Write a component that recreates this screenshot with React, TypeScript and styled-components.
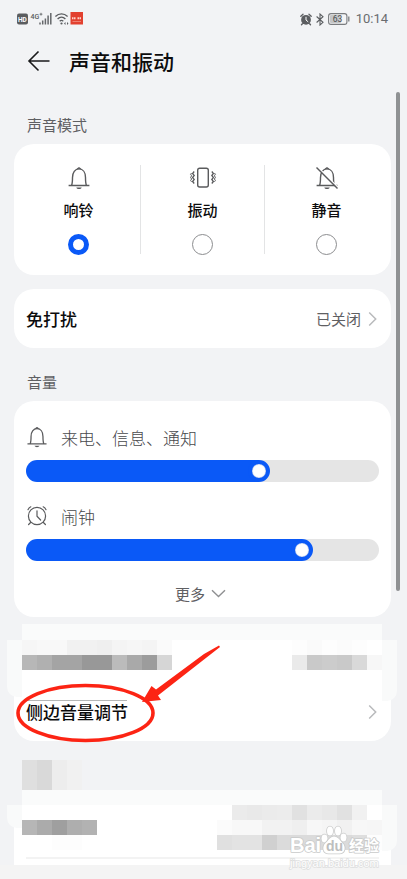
import React, { useState } from "react";
import styled, { createGlobalStyle } from "styled-components";

const GlobalStyle = createGlobalStyle`
  * { box-sizing: border-box; }
  body {
    margin: 0;
    background: #f2f3f5;
    font-family: "Noto Sans", "Noto Sans CJK SC", sans-serif;
    color: #0c0c0d;
  }
  button, input { font-family: inherit; margin: 0; }
`;

const Page = styled.main`
  position: relative;
  min-height: 100vh;
  display: flex;
  flex-direction: column;
  overflow: hidden;
  font-family: "Noto Sans CJK SC", sans-serif;
`;

const StatusBar = styled.div`
  display: flex;
  align-items: center;
  justify-content: space-between;
  height: 38px;
  padding: 0 19px 0 17px;
`;

const StatusGroup = styled.div`
  display: flex;
  align-items: center;
  gap: 4px;
  svg { display: block; }
`;

const Clock = styled.time`
  margin-left: 2px;
  font: 400 13px/16px Roboto, sans-serif;
  color: #6a6c6f;
`;

const Header = styled.header`
  display: flex;
  align-items: center;
  height: 46px;
  margin-bottom: 7px;
  padding: 0 27px;
  gap: 18px;
`;

const BackButton = styled.button`
  display: flex;
  padding: 0;
  border: 0;
  background: none;
`;

const Title = styled.h1`
  margin: 0;
  font-size: 21px;
  line-height: 30px;
  font-weight: 500;
`;

const SectionLabel = styled.h2`
  margin: 0;
  padding: 23px 27px 9px;
  font-size: 15px;
  line-height: 21px;
  font-weight: 400;
  color: #5f6063;
`;

const Card = styled.section`
  margin: 0 16px 0 14px;
  border-radius: 20px;
  background: #fff;
`;

const ModeCard = styled(Card)`
  display: flex;
  height: 131px;
  margin-bottom: 14px;
  padding: 0 3px;
`;

const Mode = styled.label`
  flex: 1;
  display: flex;
  flex-direction: column;
  align-items: center;
  padding-top: 22px;
  svg { display: block; }
`;

const ModeName = styled.span`
  margin: 10px 0 14px;
  font-size: 15px;
  line-height: 20px;
  font-weight: 500;
`;

const Radio = styled.input`
  appearance: none;
  width: 21px;
  height: 21px;
  border: 1px solid #8c8d8f;
  border-radius: 50%;
  background: #fff;
  &:checked { border: 5px solid #0a59f7; }
`;

const Divider = styled.span`
  width: 1px;
  margin: 21px 0;
  background: #e3e4e5;
`;

const LinkRow = styled.a`
  display: flex;
  align-items: center;
  justify-content: space-between;
  height: 59px;
  padding: 0 14px 0 12px;
  font-size: 17px;
  font-weight: 500;
  color: #0c0c0d;
  text-decoration: none;
`;

const RowValue = styled.span`
  display: flex;
  align-items: center;
  gap: 7px;
  font-size: 15px;
  font-weight: 400;
  color: #5f6063;
`;

const VolumeCard = styled(Card)`
  display: flex;
  flex-direction: column;
  padding: 23px 12px 0;
`;

const VolumeLabel = styled.label`
  display: flex;
  align-items: center;
  gap: 13px;
  height: 26px;
  margin-bottom: 10px;
  font-size: 17px;
  font-weight: 300;
  color: #48494c;
`;

const Slider = styled.input`
  appearance: none;
  display: block;
  width: 100%;
  height: 22px;
  border-radius: 11px;
  background: linear-gradient(to right, #0a59f7 var(--fill), #e5e5e5 var(--fill));
  &::-webkit-slider-thumb {
    appearance: none;
    width: 22px;
    height: 22px;
    border: 4px solid #0a59f7;
    border-radius: 50%;
    background: #fff;
    box-shadow: inset 0 0 1px #0a3fb0;
  }
  & + ${VolumeLabel} { margin-top: 21px; }
`;

const MoreButton = styled.button`
  display: flex;
  align-items: center;
  justify-content: center;
  gap: 6px;
  height: 44px;
  margin: 10px 0 2px;
  padding: 0 10px 0 6px;
  border: 0;
  background: none;
  font-size: 15px;
  color: #5f6063;
`;

const MaskStrip = styled.div<{ $height: number; $gap?: number }>`
  height: ${(p) => p.$height}px;
  margin: ${(p) => p.$gap ?? 0}px 25px 0 22px;
  background: #fafbfb;
`;

const MaskedCard = styled(Card)<{ $rounded?: boolean }>`
  position: relative;
  border-radius: ${(p) => (p.$rounded ? "0 0 20px 20px" : "0")};
`;

const Bleed = styled.span<{ $side: "left" | "right"; $height: number }>`
  position: absolute;
  top: 0;
  ${(p) => (p.$side === "left" ? "left: -7px" : "right: -6px")};
  width: 15px;
  height: ${(p) => p.$height}px;
  border-radius: ${(p) => (p.$side === "left" ? "0 0 0 10px" : "0 0 10px 0")};
  background: #f9fafa;
`;

const MaskedRow = styled.div<{ $height: number }>`
  display: flex;
  justify-content: space-between;
  height: ${(p) => p.$height}px;
  padding: 0 9px 0 8px;
`;

const MosaicGrid = styled.div<{ $columns: number }>`
  display: grid;
  grid-template-columns: repeat(${(p) => p.$columns}, 15px);
  grid-auto-rows: 15px;
`;

const Cell = styled.span<{ $tone: string }>`
  background: #${(p) => p.$tone.repeat(3)};
`;

const HiddenHeading = styled.div`
  margin: 19px 0 0 22px;
`;

const Hairline = styled.hr<{ $dark?: boolean }>`
  position: absolute;
  margin: 0;
  border: 0;
  ${(p) =>
    p.$dark
      ? "top: 60px; left: 13px; width: 100px; height: 1px; background: #b5b7b7;"
      : "bottom: 6px; left: 12px; right: 12px; height: 2px; background: #f3f3f3;"}
`;

const Annotation = styled.svg`
  position: absolute;
  top: 0;
  left: 0;
  overflow: visible;
  pointer-events: none;
`;

const Watermark = styled.svg`
  position: absolute;
  right: 10px;
  bottom: -4px;
  overflow: visible;
`;

const Footer = styled.div`
  flex: 1;
  min-height: 14px;
  background: #f4f4f4;
`;

const ScrollThumb = styled.span`
  position: absolute;
  top: 92px;
  right: 7px;
  width: 4px;
  height: 499px;
  border-radius: 2px;
  background: #8f9193;
`;

const Bell = ({ size = 24, muted = false }: { size?: number; muted?: boolean }) => (
  <svg width={size} height={size} viewBox="0 0 24 24" fill="none" stroke="#5a5b5d" strokeWidth="1.4">
    <path d="M1.6 19.5h20.8M4.6 19.3c.8-1.8.9-3.5.9-7.800 0-5 2.500-8.600 6.500-8.600s6.500 3.600 6.500 8.600c0 4.300.1 6 .9 7.800" />
    <path d="M10.200 2.700c.3-1.300 3.300-1.300 3.600 0z" fill="#5a5b5d" strokeWidth=".8" />
    <path d="M9.300 21.600h5.400c-.6 2-4.800 2-5.400 0z" fill="#5a5b5d" stroke="none" />
    {muted && (
      <>
        <path d="M2.800 1.200l20.500 20.500" stroke="#fff" strokeWidth="1.600" />
        <path d="M1.500 1.500L22.500 22.500" />
      </>
    )}
  </svg>
);

const Vibrate = () => (
  <svg width="28" height="24" viewBox="0 0 28 24" fill="none" stroke="#5a5b5d" strokeWidth="1.400">
    <rect x="8.700" y="2.200" width="10.600" height="18.800" rx="2" />
    <path d="M5.200 5.500l-1.600 2 1.600 2-1.600 2 1.600 2-1.600 2 1.600 2M22.800 5.500l1.600 2-1.600 2 1.600 2-1.600 2 1.600 2-1.600 2" strokeWidth="1.300" />
    <path d="M2.600 7l-1 1.200 1 1.600-1 1.600 1 1.600-1 1.600 1 1.200M25.400 7l1 1.200-1 1.600 1 1.600-1 1.600 1 1.600-1 1.200" strokeWidth="1" />
  </svg>
);

const AlarmClock = () => (
  <svg width="22" height="22" viewBox="0 0 22 22" fill="none" stroke="#5a5b5d" strokeWidth="1.200" strokeLinecap="round">
    <circle cx="11" cy="11" r="8.600" />
    <path d="M11 5.800v5.400l3.600 3.800M2 4.700C2.600 3.400 3.500 2.400 4.800 1.800M20 4.700c-.6-1.300-1.500-2.300-2.800-2.900M4.600 17.500l-2 2M17.400 17.500l2 2" />
  </svg>
);

const Chevron = () => (
  <svg width="9" height="16" viewBox="0 0 9 16" fill="none" stroke="#b9babc" strokeWidth="1.500">
    <path d="M1.200 1.500L7.700 8l-6.500 6.500" />
  </svg>
);

const NetworkIcons = () => (
  <svg width="67" height="14" viewBox="0 0 67 14" fill="none" role="img" aria-label="HD 4G+">
    <rect x="0" y="1.500" width="11" height="11" rx="2" fill="#5b5d60" />
    <text x="1" y="9.500" fontFamily="Roboto" fontWeight="700" fontSize="6.500" fill="#fff">HD</text>
    <text x="13.600" y="6.500" fontFamily="Roboto" fontWeight="500" fontSize="7" fill="#5b5d60">4G</text>
    <path d="M22.600 2.200h2.800M24 .8v2.800" stroke="#5b5d60" strokeWidth=".8" />
    <path d="M24 12.500v-2M26.700 12.500v-4M29.400 12.500V6.500M32.100 12.500V3.500M34.800 12.500V1" transform="translate(-1 0)" stroke="#66686b" strokeWidth="1.500" />
    <path d="M38.400 4.400c3.600-3.400 8.600-3.400 12.200 0M40.600 6.900c2.300-2.200 5.500-2.200 7.800 0M42.700 9.200c1.100-1 2.500-1 3.600 0" stroke="#5b5d60" strokeWidth="1.400" />
    <circle cx="44.500" cy="11.500" r="1.100" fill="#5b5d60" />
    <path d="M47 11.500l1.500-1.500v3zM51.500 11.500l-1.500-1.500v3z" fill="#5b5d60" />
    <rect x="53.500" y="0" width="12.500" height="12.500" fill="#e2402f" />
    <path d="M55 6.200h4M60.500 6.200h4" stroke="#ffd3ca" strokeWidth="2" strokeDasharray="1.500 .5" />
    <path d="M55.500 9.500h8.500" stroke="#f39a8c" strokeWidth=".7" />
  </svg>
);

const AlarmStatus = () => (
  <svg width="12" height="13" viewBox="0 0 12 13" fill="none" stroke="#5b5d60" strokeLinecap="round">
    <circle cx="6" cy="6.800" r="4.900" fill="#5b5d60" stroke="none" />
    <path d="M.8 3.200L3 1.200M11.200 3.200L9 1.200M2.400 10.800l-.9 1M9.600 10.800l.9 1" strokeWidth="1.300" />
    <path d="M6 4.200V7l1.900 1.600" stroke="#fff" />
  </svg>
);

const Bluetooth = () => (
  <svg width="8" height="13" viewBox="0 0 8 13" fill="none" stroke="#5b5d60" strokeWidth="1.100">
    <path d="M.6 3.500l6.400 5.800-3 2.700V1l3 2.700L.6 9.500" />
  </svg>
);

const Battery = () => (
  <svg width="22" height="12" viewBox="0 0 22 12" role="img" aria-label="63%">
    <rect x=".6" y=".6" width="18.300" height="10.800" rx="2.400" fill="#f4f4f5" stroke="#7a7c7f" strokeWidth="1.100" />
    <rect x="2" y="2" width="11" height="8" rx="1" fill="#c4c5c7" />
    <path d="M20.800 3.500v5" stroke="#7a7c7f" strokeWidth="1.300" />
    <text x="4.700" y="9" fontFamily="Roboto" fontWeight="400" fontSize="8.500" fill="#4a4c4e">63</text>
  </svg>
);

const Mosaic = ({ rows }: { rows: string[] }) => {
  const cells = rows.map((row) => row.split(" "));
  return (
    <MosaicGrid $columns={cells[0].length} aria-hidden="true">
      {cells.flatMap((row, y) => row.map((tone, x) => <Cell key={`${y}-${x}`} $tone={tone} />))}
    </MosaicGrid>
  );
};

const modes = [
  { id: "ring", name: "响铃", icon: <Bell /> },
  { id: "vibrate", name: "振动", icon: <Vibrate /> },
  { id: "mute", name: "静音", icon: <Bell muted /> },
];

const Volume = ({ id, name, icon, initial }: { id: string; name: string; icon: React.ReactNode; initial: number }) => {
  const [value, setValue] = useState(initial);
  const fill = `calc(11px + (100% - 22px) * ${value / 100})`;
  return (
    <>
      <VolumeLabel htmlFor={id}>
        {icon}
        {name}
      </VolumeLabel>
      <Slider
        id={id}
        type="range"
        min={0}
        max={100}
        value={value}
        onChange={(e) => setValue(Number(e.target.value))}
        style={{ "--fill": fill } as React.CSSProperties}
      />
    </>
  );
};

export default function App() {
  const [mode, setMode] = useState("ring");
  return (
    <Page>
      <GlobalStyle />
      <StatusBar>
        <StatusGroup>
          <NetworkIcons />
        </StatusGroup>
        <StatusGroup>
          <AlarmStatus />
          <Bluetooth />
          <Battery />
          <Clock>10:14</Clock>
        </StatusGroup>
      </StatusBar>
      <Header>
        <BackButton aria-label="返回">
          <svg width="24" height="22" viewBox="0 0 24 22" fill="none" stroke="#1a1a1b" strokeWidth="1.600">
            <path d="M22.500 11H2.500M11.500 1.500L2 11l9.500 9.500" />
          </svg>
        </BackButton>
        <Title>声音和振动</Title>
      </Header>
      <SectionLabel>声音模式</SectionLabel>
      <ModeCard>
        {modes.map((m, i) => (
          <React.Fragment key={m.id}>
            {i > 0 && <Divider />}
            <Mode>
              {m.icon}
              <ModeName>{m.name}</ModeName>
              <Radio type="radio" name="mode" checked={mode === m.id} onChange={() => setMode(m.id)} />
            </Mode>
          </React.Fragment>
        ))}
      </ModeCard>
      <Card>
        <LinkRow href="#dnd">
          免打扰
          <RowValue>
            已关闭
            <Chevron />
          </RowValue>
        </LinkRow>
      </Card>
      <SectionLabel>音量</SectionLabel>
      <VolumeCard>
        <Volume id="ringer" name="来电、信息、通知" icon={<Bell size={22} />} initial={67} />
        <Volume id="alarm" name="闹钟" icon={<AlarmClock />} initial={80} />
        <MoreButton>
          更多
          <svg width="15" height="9" viewBox="0 0 15 9" fill="none" stroke="#8f9092" strokeWidth="1.400">
            <path d="M1 1.200l6.500 6.300L14 1.200" />
          </svg>
        </MoreButton>
      </VolumeCard>

      <MaskStrip $height={16} $gap={7} />
      <MaskedCard $rounded>
        <Bleed $side="left" $height={57} />
        <Bleed $side="right" $height={61} />
        <MaskedRow $height={42}>
          <Mosaic
            rows={["f6 f8 f8 f1 f1 ef f4 f6 f4 fa", "b7 b0 a4 a4 98 98 bb a9 9c d6"]}
          />
          <Mosaic rows={["fd fa fd fb fd ff", "ea c9 cc c9 d9 f7"]} />
        </MaskedRow>
        <LinkRow href="#side-volume">
          侧边音量调节
          <Chevron />
        </LinkRow>
        <Hairline $dark />
        <Annotation width="220" height="110" viewBox="0 0 220 110" aria-hidden="true">
          <ellipse cx="71.500" cy="73" rx="67.500" ry="27.500" fill="none" stroke="#fc2414" strokeWidth="3.600" />
          <path d="M205 5.500L190 14 142 49.500 137.500 46 128 62l19-2-3-4.500L190 19.500 206 7z" fill="#fc2414" />
        </Annotation>
      </MaskedCard>

      <HiddenHeading>
        <Mosaic rows={["df d9 ed f1", "df d9 ed f1"]} />
      </HiddenHeading>
      <MaskStrip $height={15} />
      <MaskedCard>
        <Bleed $side="left" $height={23} />
        <Bleed $side="right" $height={46} />
        <MaskedRow $height={60}>
          <Mosaic rows={["ff ff ff ff ff", "b6 ab 9f ae b2", "ff ff fd fd ff"]} />
          <Mosaic
            rows={[
              "ff eb e9 eb ec e1 eb e8 e1 f1 ff",
              "fb f8 f8 f2 f2 ef f7 f5 f1 f7 f6",
              "e0 e3 e3 d0 db db db dc db de fd",
            ]}
          />
        </MaskedRow>
        <Hairline />
        <Watermark width="92" height="46" viewBox="0 0 92 46">
          <g fill="#fff" stroke="#c9caca" strokeWidth="1.600" paintOrder="stroke" strokeLinejoin="round" fontFamily="'Liberation Sans', sans-serif">
            <text x="1" y="29" fontSize="20" fontWeight="700">Bai</text>
            <ellipse cx="35.500" cy="15.500" rx="3" ry="4" />
            <ellipse cx="41" cy="8" rx="3" ry="4.500" />
            <ellipse cx="49" cy="8" rx="3" ry="4.500" />
            <ellipse cx="54.500" cy="14.500" rx="3" ry="4" />
            <path d="M45 13.500c-4 0-5.500 4-8.500 6.500-3.500 3-3 10.500 3 10.500h11c6 0 6.500-7.500 3-10.500-2.500-2.500-4.500-6.500-8.500-6.500z" />
            <text x="60" y="28" fontSize="15" fontWeight="700" fontFamily="'Noto Sans CJK SC', sans-serif">经验</text>
          </g>
          <text x="37" y="28" fontSize="14" fontWeight="700" fontFamily="'Liberation Sans', sans-serif" fill="#bdbebe">du</text>
          <text x="1" y="44" fontSize="11" fontFamily="'Liberation Sans', sans-serif" fill="#fff" stroke="#dddede" strokeWidth="1.500" paintOrder="stroke">jingyan.baidu.com</text>
        </Watermark>
      </MaskedCard>
      <Footer />
      <ScrollThumb />
    </Page>
  );
}
